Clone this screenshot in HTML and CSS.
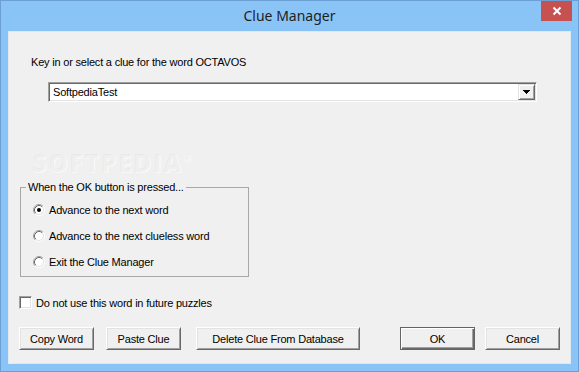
FILE: index.html
```html
<!DOCTYPE html>
<html>
<head>
<meta charset="utf-8">
<title>Clue Manager</title>
<link rel="stylesheet" href="styles.css">
</head>
<body>
<div class="window">
  <div class="titlebar">
    <span class="title">Clue Manager</span>
    <button class="close" aria-label="Close">
      <svg width="10" height="10" viewBox="0 0 10 10"><path d="M1.5 1.5L8.5 8.5M8.5 1.5L1.5 8.5" stroke="#fff" stroke-width="2" fill="none"/></svg>
    </button>
  </div>
  <div class="client">
    <div class="prompt">Key in or select a clue for the word OCTAVOS</div>
    <div class="combo">
      <span class="combo-text">SoftpediaTest</span>
      <span class="combo-btn"><svg width="7" height="4" viewBox="0 0 7 4"><path d="M0 0h7v1H0zM1 1h5v1H1zM2 2h3v1H2zM3 3h1v1H3z" fill="#000"/></svg></span>
    </div>
    <fieldset class="group">
      <legend>When the OK button is pressed...</legend>
      <div class="radio-row first">
        <svg class="radio" width="12" height="12" viewBox="0 0 12 12">
          <circle cx="6" cy="6" r="4.5" fill="#fff"/>
          <path d="M2.11 9.89A5.5 5.5 0 0 1 9.89 2.11" stroke="#a0a0a0" fill="none"/>
          <path d="M9.89 2.11A5.5 5.5 0 0 1 2.11 9.89" stroke="#fff" fill="none"/>
          <path d="M2.82 9.18A4.5 4.5 0 0 1 9.18 2.82" stroke="#696969" fill="none"/>
          <path d="M9.18 2.82A4.5 4.5 0 0 1 2.82 9.18" stroke="#e3e3e3" fill="none"/>
          <circle cx="6" cy="6" r="2" fill="#000"/>
        </svg>
        <span>Advance to the next word</span>
      </div>
      <div class="radio-row">
        <svg class="radio" width="12" height="12" viewBox="0 0 12 12">
          <circle cx="6" cy="6" r="4.5" fill="#fff"/>
          <path d="M2.11 9.89A5.5 5.5 0 0 1 9.89 2.11" stroke="#a0a0a0" fill="none"/>
          <path d="M9.89 2.11A5.5 5.5 0 0 1 2.11 9.89" stroke="#fff" fill="none"/>
          <path d="M2.82 9.18A4.5 4.5 0 0 1 9.18 2.82" stroke="#696969" fill="none"/>
          <path d="M9.18 2.82A4.5 4.5 0 0 1 2.82 9.18" stroke="#e3e3e3" fill="none"/>
        </svg>
        <span>Advance to the next clueless word</span>
      </div>
      <div class="radio-row">
        <svg class="radio" width="12" height="12" viewBox="0 0 12 12">
          <circle cx="6" cy="6" r="4.5" fill="#fff"/>
          <path d="M2.11 9.89A5.5 5.5 0 0 1 9.89 2.11" stroke="#a0a0a0" fill="none"/>
          <path d="M9.89 2.11A5.5 5.5 0 0 1 2.11 9.89" stroke="#fff" fill="none"/>
          <path d="M2.82 9.18A4.5 4.5 0 0 1 9.18 2.82" stroke="#696969" fill="none"/>
          <path d="M9.18 2.82A4.5 4.5 0 0 1 2.82 9.18" stroke="#e3e3e3" fill="none"/>
        </svg>
        <span>Exit the Clue Manager</span>
      </div>
    </fieldset>
    <div class="check-row">
      <span class="checkbox"></span>
      <span>Do not use this word in future puzzles</span>
    </div>
    <div class="buttons">
      <button class="btn">Copy Word</button>
      <button class="btn paste">Paste Clue</button>
      <button class="btn delete">Delete Clue From Database</button>
      <button class="btn ok">OK</button>
      <button class="btn cancel">Cancel</button>
    </div>
    <div class="watermark">SOFTPEDIA<span class="reg">®</span></div>
  </div>
</div>
</body>
</html>
```
FILE: styles.css
```css
* { box-sizing: border-box; }

html, body {
  margin: 0;
  padding: 0;
}

body {
  width: 579px;
  height: 372px;
  overflow: hidden;
  background: #8ac4f7;
  font-family: "Liberation Sans", Arial, sans-serif;
  font-size: 11px;
  letter-spacing: -0.2px;
  color: #000;
}

.window {
  width: 579px;
  height: 372px;
  border: 1px solid #6c9fd3;
  background: #8ac4f7;
  position: relative;
  display: flex;
  flex-direction: column;
}

.titlebar {
  height: 30px;
  flex: none;
  display: flex;
  align-items: center;
  justify-content: center;
}

.title {
  font-family: "Noto Sans", "Open Sans", sans-serif;
  font-size: 14px;
  letter-spacing: 0;
  color: #1e1e1e;
  line-height: 30px;
}

.close {
  position: absolute;
  top: 0;
  right: 6px;
  width: 31px;
  height: 20px;
  background: #c75050;
  border: 0;
  padding: 0;
  display: flex;
  align-items: center;
  justify-content: center;
}

.close svg { display: block; }

.client {
  margin: 0 7px;
  height: 333px;
  background: #f0f0f0;
  position: relative;
  padding: 25px 11px 0;
  box-shadow: inset 0 0 0 1px #dfe7ef;
}

.prompt {
  padding-left: 12px;
  line-height: 13px;
}

.combo {
  margin: 13px 0 0 29px;
  width: 489px;
  height: 20px;
  background: #fff;
  border: 1px solid;
  border-color: #a0a0a0 #fff #fff #a0a0a0;
  box-shadow: inset 1px 1px 0 #696969, inset -1px -1px 0 #e3e3e3;
  display: flex;
  align-items: center;
  padding: 1px 1px 1px 4px;
}

.combo-text {
  flex: 1;
  line-height: 16px;
}

.combo-btn {
  width: 17px;
  height: 16px;
  background: #f0f0f0;
  border: 1px solid;
  border-color: #e3e3e3 #696969 #696969 #e3e3e3;
  box-shadow: inset 1px 1px 0 #fff, inset -1px -1px 0 #a0a0a0;
  display: flex;
  align-items: center;
  justify-content: center;
}

.combo-btn svg { display: block; }

.group {
  margin: 79px 0 0 1px;
  width: 229px;
  border: 1px solid #a8a8a8;
  padding: 2px 0 1px 0;
  min-width: 0;
}

.group legend {
  padding: 0 2px;
  margin-left: 5px;
  line-height: 13px;
}

.radio-row {
  display: flex;
  align-items: center;
  gap: 4px;
  height: 26px;
  padding-left: 12px;
}

.radio-row.first { height: 27px; }

.radio { display: block; flex: none; }

.check-row {
  margin-top: 19px;
  height: 13px;
  display: flex;
  align-items: center;
  gap: 4px;
}

.checkbox {
  width: 13px;
  height: 13px;
  flex: none;
  background: #fff;
  border: 1px solid;
  border-color: #a0a0a0 #fff #fff #a0a0a0;
  box-shadow: inset 1px 1px 0 #696969, inset -1px -1px 0 #e3e3e3;
}

.buttons {
  margin-top: 18px;
  display: flex;
}

.btn {
  width: 75px;
  height: 23px;
  padding: 0;
  font: inherit;
  letter-spacing: inherit;
  color: #000;
  background: #f0f0f0;
  border: 1px solid;
  border-color: #fff #696969 #696969 #fff;
  box-shadow: inset 1px 1px 0 #e3e3e3, inset -1px -1px 0 #a0a0a0;
}

.btn.paste { margin-left: 12px; }

.btn.delete {
  margin-left: 15px;
  width: 164px;
}

.btn.ok {
  margin-left: auto;
  border-color: #646464;
  box-shadow: inset 1px 1px 0 #fff, inset -1px -1px 0 #696969, inset -2px -2px 0 #a0a0a0;
}

.btn.cancel { margin-left: 10px; }

.watermark {
  position: absolute;
  left: 24px;
  top: 122px;
  font-family: "Open Sans", sans-serif;
  font-weight: 800;
  font-size: 25px;
  line-height: 18px;
  letter-spacing: 1.5px;
  color: rgba(0, 0, 0, 0.035);
  text-shadow: 1px 1px 0 rgba(255, 255, 255, 0.5);
  pointer-events: none;
}

.watermark .reg {
  font-size: 10px;
  vertical-align: top;
  line-height: 10px;
}
```
